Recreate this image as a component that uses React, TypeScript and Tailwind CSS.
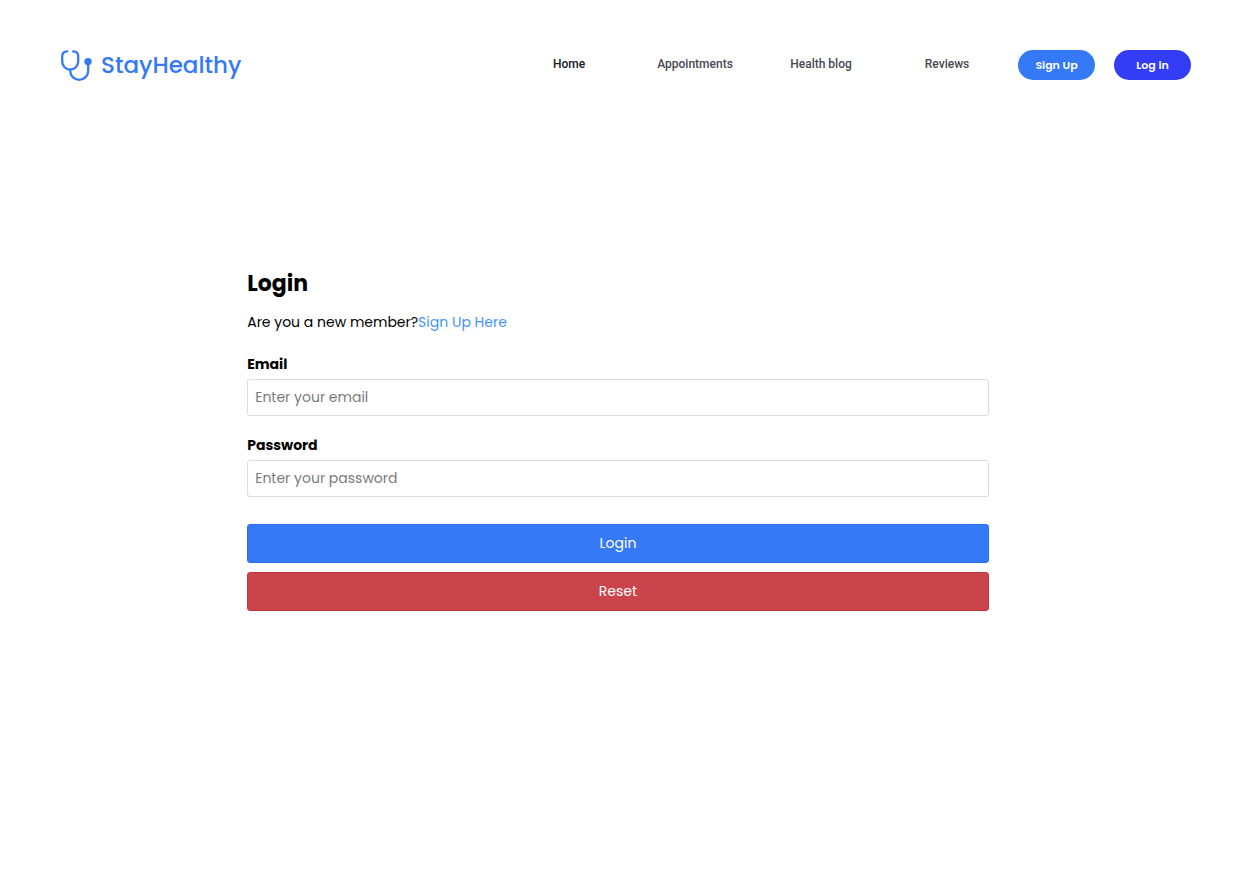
import React from "react";

const links = [
  { label: "Home", color: "text-[#18191f]" },
  { label: "Appointments", color: "text-[#474850]" },
  { label: "Health blog", color: "text-[#474850]" },
  { label: "Reviews", color: "text-[#474850]" },
];

function Stethoscope() {
  return (
    <svg
      className="h-8 w-8 shrink-0"
      viewBox="0 0 32 32"
      fill="none"
      stroke="#3579f6"
      strokeWidth="2.3"
      strokeLinecap="round"
      aria-hidden="true"
    >
      <path d="M7.3 2.4C4 2.4 2.2 4.2 2.2 7.4V12.6a8 8 0 0 0 16 0V7.4C18.2 4.2 16.4 2.4 13.1 2.4" />
      <path d="M10.2 20.6v1.2a9 9 0 0 0 18 0V12" />
      <circle cx="28" cy="12.6" r="3.7" fill="#3579f6" stroke="none" />
    </svg>
  );
}

function Field({ id, label, type, placeholder }: { id: string; label: string; type: string; placeholder: string }) {
  return (
    <div className="flex flex-col gap-[3px]">
      <label htmlFor={id} className="leading-6 font-bold">
        {label}
      </label>
      <input
        id={id}
        type={type}
        placeholder={placeholder}
        className="h-[37px] w-full rounded-[3px] border border-[#dcdcdc] px-[7px] placeholder:text-[#7b7b7b]"
      />
    </div>
  );
}

export default function App() {
  return (
    <div className="bg-white font-['Poppins','Inter',sans-serif] text-[14px] text-black">
      <header className="flex items-center justify-between pt-[49px] pr-[45px] pl-[60px]">
        <a href="#home" className="flex items-center gap-[9px] text-[23px] leading-8 font-medium text-[#3579f6]">
          <Stethoscope />
          <span>StayHealthy</span>
        </a>
        <div className="flex items-center gap-2">
          <nav className="flex pb-0.5 font-['Roboto',sans-serif] text-xs font-medium">
            {links.map((link) => (
              <a key={link.label} href="#" className={`w-[126px] text-center ${link.color}`}>
                {link.label}
              </a>
            ))}
          </nav>
          <div className="flex gap-[19px] text-[11px] font-semibold text-white">
            <button type="button" className="h-[30px] w-[77px] rounded-full bg-[#3579f6]">
              Sign Up
            </button>
            <button type="button" className="h-[30px] w-[77px] rounded-full bg-[#333df6]">
              Log in
            </button>
          </div>
        </div>
      </header>

      <main className="mx-auto mt-[187px] w-3/5">
        <h1 className="text-[22px] leading-8 font-bold">Login</h1>
        <p className="mt-[10px] leading-6">
          Are you a new member?
          <a href="#signup" className="text-[#4793f8]">
            Sign Up Here
          </a>
        </p>
        <form className="mt-[18px]">
          <div className="flex flex-col gap-[17px]">
            <Field id="email" label="Email" type="email" placeholder="Enter your email" />
            <Field id="password" label="Password" type="password" placeholder="Enter your password" />
          </div>
          <div className="mt-[27px] flex flex-col gap-[9px] text-white">
            <button type="submit" className="h-[39px] rounded-[3px] border border-[#2b6ff5] bg-[#3579f6]">
              Login
            </button>
            <button type="reset" className="h-[39px] rounded-[3px] border border-[#c1363e] bg-[#c9444b]">
              Reset
            </button>
          </div>
        </form>
      </main>
    </div>
  );
}
